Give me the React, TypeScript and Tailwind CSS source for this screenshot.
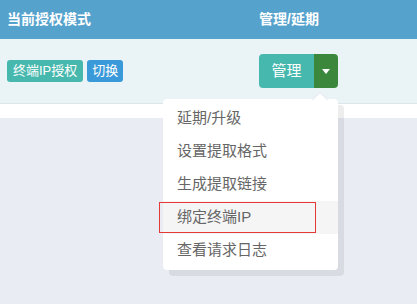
import React from "react";

const items = ["延期/升级", "设置提取格式", "生成提取链接", "绑定终端IP", "查看请求日志"];

export default function App() {
  const active = 3;

  return (
    <div
      className="w-[417px] h-[304px] bg-[#e9ecf3] overflow-hidden"
      style={{ fontFamily: '"Liberation Sans", "Noto Sans CJK SC", sans-serif' }}
    >
      <div className="h-[39px] bg-[#55a2cd] flex items-center text-white font-bold text-[14px]">
        <div className="w-[259px] pl-[7px]">当前授权模式</div>
        <div>管理/延期</div>
      </div>

      <div className="h-[65px] bg-[#eaf3f6] border-b border-[#dde6ea] flex items-center">
        <div className="w-[259px] pl-[7px] flex items-center gap-[4px]">
          <span className="h-[22px] px-[6px] flex items-center rounded-[3px] bg-[#47b8ad] text-white text-[13px]">
            终端IP授权
          </span>
          <span className="h-[22px] px-[5px] flex items-center rounded-[3px] bg-[#3a99d8] text-white text-[13px]">
            切换
          </span>
        </div>

        <div className="relative flex h-[34px]">
          <button className="w-[55px] h-full bg-[#47b8ad] text-white text-[15px] rounded-l-[4px] flex items-center justify-center">
            管理
          </button>
          <button className="w-[24px] h-full bg-[#3b873b] rounded-r-[4px] flex items-center justify-center">
            <svg width="8" height="5" viewBox="0 0 8 5">
              <path d="M0 0 H8 L4 5 Z" fill="#fff" />
            </svg>
          </button>

          <div className="absolute right-0 top-[45px] w-[175px] z-10">
            <div className="absolute -top-[7px] right-[10px] w-0 h-0 border-x-[8px] border-x-transparent border-b-[8px] border-b-[#e3e6ea]" />
            <div className="absolute -top-[6px] right-[11px] w-0 h-0 border-x-[7px] border-x-transparent border-b-[7px] border-b-white" />
            <div className="bg-white rounded-[4px] py-[3px] shadow-[6px_6px_0_rgba(0,0,0,0.07)]">
              {items.map((item, i) => (
                <div
                  key={item}
                  className={
                    "relative h-[33px] flex items-center pl-[14px] text-[15px] text-[#666] " +
                    (i === active ? "bg-[#f5f5f5]" : "")
                  }
                >
                  {item}
                  {i === active && (
                    <div className="absolute -left-[4px] right-[22px] top-[1px] bottom-[1px] border border-[#e53935]" />
                  )}
                </div>
              ))}
            </div>
          </div>
        </div>
      </div>

      <div className="h-[14px] bg-white" />
    </div>
  );
}
